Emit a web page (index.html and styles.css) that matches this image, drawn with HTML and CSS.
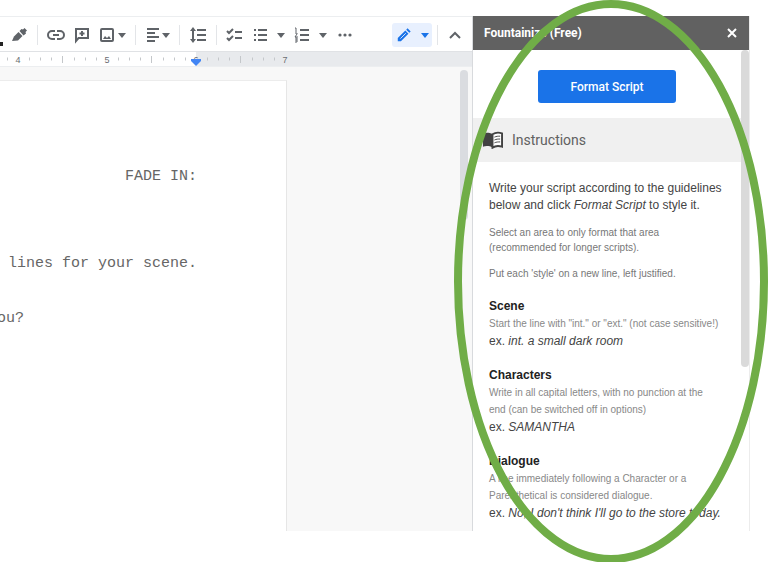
FILE: index.html
```html
<!DOCTYPE html>
<html lang="en">

<head>
    <meta charset="UTF-8">
    <meta name="viewport" content="width=device-width, initial-scale=1.0">
    <title>Fountainize</title>
    <link rel="stylesheet" href="styles.css">
</head>

<body>
    <div class="app">
        <main class="editor">
            <div class="toolbar">
                <span class="color-bar"></span>
                <button class="tool" aria-label="Highlight color">
                    <svg class="icon" viewBox="0 0 18 18"><g fill="#5f6368" stroke="none"><path d="M2 15l2-4.500L8.500 6l4 4L8 14.500z"/><path d="M9.500 5l2-2 1.500.5L14.500 2 17 4.500 15.500 6l.5 1.500-2.500 2z"/></g></svg>
                </button>
                <span class="sep"></span>
                <button class="tool" aria-label="Insert link">
                    <svg class="icon" viewBox="0 0 18 18"><path d="M8 5H5a4 4 0 0 0 0 8h3M10 5h3a4 4 0 0 1 0 8h-3M6 9h6"/></svg>
                </button>
                <button class="tool" aria-label="Add comment">
                    <svg class="icon" viewBox="0 0 18 18"><path d="M3 15V3h12v9H5.500zM9 5v5M6.500 7.500h5"/></svg>
                </button>
                <button class="tool drop" aria-label="Insert image">
                    <svg class="icon" viewBox="0 0 18 18"><rect x="3" y="3" width="12" height="12" rx="1"/><path d="M5 13l2-3 2 2 2-2 2 3z" fill="#5f6368" stroke="none"/></svg>
                    <svg class="arrow" viewBox="0 0 8 5"><path d="M0 0h8L4 5z"/></svg>
                </button>
                <span class="sep"></span>
                <button class="tool drop tight" aria-label="Align">
                    <svg class="icon" viewBox="0 0 18 18"><path d="M3 3h12M3 7h8M3 11h12M3 15h8"/></svg>
                    <svg class="arrow" viewBox="0 0 8 5"><path d="M0 0h8L4 5z"/></svg>
                </button>
                <span class="sep"></span>
                <button class="tool" aria-label="Line spacing">
                    <svg class="icon" viewBox="0 0 18 18"><path d="M8 4h9M8 9h9M8 14h9M4 4v10"/><path d="M4 1l3 4H1zM4 17l3-4H1z" fill="#5f6368" stroke="none"/></svg>
                </button>
                <span class="sep"></span>
                <button class="tool" aria-label="Checklist">
                    <svg class="icon" viewBox="0 0 18 18"><path d="M9 6h7M9 12h7M1 5l2 2 4-4M1 12l2 2 4-4"/></svg>
                </button>
                <button class="tool drop wide" aria-label="Bulleted list">
                    <svg class="icon" viewBox="0 0 18 18"><path d="M7 4h9M7 9h9M7 14h9M3 4h2M3 9h2M3 14h2"/></svg>
                    <svg class="arrow" viewBox="0 0 8 5"><path d="M0 0h8L4 5z"/></svg>
                </button>
                <button class="tool drop wide" aria-label="Numbered list">
                    <svg class="icon" viewBox="0 0 18 18"><path d="M7 4h9M7 9h9M7 14h9"/><path d="M2 2h1v4M2 7h2v1l-2 3h3M2 12h2v4H2M2 14h2" stroke-width="1"/></svg>
                    <svg class="arrow" viewBox="0 0 8 5"><path d="M0 0h8L4 5z"/></svg>
                </button>
                <button class="tool" aria-label="More">
                    <svg class="icon" viewBox="0 0 18 18"><g fill="#5f6368" stroke="none"><circle cx="4" cy="9" r="1.600"/><circle cx="9" cy="9" r="1.600"/><circle cx="14" cy="9" r="1.600"/></g></svg>
                </button>
                <button class="mode" aria-label="Editing mode">
                    <svg class="icon" viewBox="0 0 18 18"><path d="M2 16v-3.500L10.500 4l3.500 3.500L5.500 16zM11.500 3L13 1.500 16.500 5 15 6.500z" fill="#1a73e8" stroke="none"/><path d="M5 13l6-6" stroke="#e8f0fe" stroke-width="1"/></svg>
                    <svg class="arrow" viewBox="0 0 8 5"><path d="M0 0h8L4 5z"/></svg>
                </button>
                <span class="sep"></span>
                <button class="tool" aria-label="Hide the menus">
                    <svg class="icon" viewBox="0 0 18 18"><path d="M3 12l5-5 5 5"/></svg>
                </button>
            </div>

            <svg class="ruler" height="14">
                <defs>
                    <pattern id="ticks" x="7" width="89" height="14" patternUnits="userSpaceOnUse">
                        <path d="M.5 5.500v3M22.500 5.500v3M33.500 5.500v3M44.500 5.500v3M55.500 4v7M67.500 5.500v3M78.500 5.500v3" stroke="#c4c7ca"/>
                    </pattern>
                </defs>
                <rect width="196" height="14" fill="#fff"/>
                <rect width="280" height="14" fill="url(#ticks)"/>
                <text x="18" y="11">4</text>
                <text x="107" y="11">5</text>
                <text x="196" y="11">6</text>
                <text x="285" y="11">7</text>
                <path d="M191 7h10v2l-5 5-5-5z" fill="#4285f4"/>
            </svg>

            <div class="canvas">
                <div class="paper">
                    <p class="line transition">FADE IN:</p>
                    <p class="line action">n lines for your scene.</p>
                    <p class="line speech">ou?</p>
                </div>
                <div class="scroll"></div>
            </div>
        </main>

        <aside class="sidebar">
            <header class="side-head">
                <h1>Fountainize (Free)</h1>
                <button class="close" aria-label="Close">
                    <svg width="10" height="10" viewBox="0 0 10 10"><path d="M1 1l8 8M9 1l-8 8" stroke="#fff" stroke-width="2"/></svg>
                </button>
            </header>
            <div class="side-body">
                <div class="side-content">
                    <div class="action-row">
                        <button class="format">Format Script</button>
                    </div>
                    <h2 class="band">
                        <svg width="21" height="18" viewBox="0 0 22 18"><path d="M11 3C8 1 4 1 1 2v14c3-1 7-1 10 1z" fill="#424242"/><path d="M11 3c3-2 7-2 10-1v14c-3-1-7-1-10 1z" fill="#fff" stroke="#424242" stroke-width="2"/><path d="M13 6c2-1 4-1 6-1M13 9c2-1 4-1 6-1M13 12c2-1 4-1 6-1" fill="none" stroke="#424242"/></svg>
                        Instructions
                    </h2>
                    <div class="guide">
                        <p class="intro">Write your script according to the guidelines<br>below and click <i>Format Script</i> to style it.</p>
                        <p class="note">Select an area to only format that area<br>(recommended for longer scripts).</p>
                        <p class="note">Put each 'style' on a new line, left justified.</p>

                        <section class="rule">
                            <h3>Scene</h3>
                            <p class="desc">Start the line with "int." or "ext." (not case sensitive!)</p>
                            <p>ex. <i>int. a small dark room</i></p>
                        </section>
                        <section class="rule">
                            <h3>Characters</h3>
                            <p class="desc">Write in all capital letters, with no punction at the<br>end (can be switched off in options)</p>
                            <p>ex. <i>SAMANTHA</i></p>
                        </section>
                        <section class="rule">
                            <h3>Dialogue</h3>
                            <p class="desc">A line immediately following a Character or a<br>Parenthetical is considered dialogue.</p>
                            <p>ex. <i>No, I don't think I'll go to the store today.</i></p>
                        </section>
                    </div>
                </div>
                <div class="side-scroll"></div>
            </div>
            <!-- green highlight ring -->
            <svg class="ring" viewBox="0 0 314 562" preserveAspectRatio="none"><ellipse cx="157" cy="281" rx="153" ry="277" fill="none" stroke="#70ad47" stroke-width="8"/></svg>
        </aside>
    </div>
</body>

</html>
```
FILE: styles.css
```css
* {
    box-sizing: border-box;
}

body {
    margin: 0;
    background: #fff;
    font-family: "Liberation Sans", Arial, sans-serif;
}

h1, h2, h3, p {
    margin: 0;
}

button {
    border: none;
    padding: 0;
    background: none;
    cursor: pointer;
}

.app {
    display: flex;
    margin: 16px 18px 32px 0;
}

.editor {
    flex: 1;
    min-width: 0;
    display: flex;
    flex-direction: column;
    overflow: hidden;
}

/* toolbar */
.toolbar {
    display: flex;
    align-items: center;
    height: 36px;
    padding: 2px 3px 0 0;
    border-top: 1px solid #eceef0;
    border-bottom: 1px solid #e0e2e5;
}

.color-bar {
    align-self: flex-end;
    width: 3px;
    height: 4px;
    margin: 0 3px 5px 0;
    background: #222;
}

.tool {
    flex: none;
    display: flex;
    align-items: center;
    justify-content: center;
    width: 26px;
    height: 24px;
}

.drop {
    justify-content: flex-start;
    width: 35px;
    padding-left: 3px;
    gap: 2px;
}

.drop.tight {
    width: 33px;
    gap: 0;
}

.drop.wide {
    width: 42px;
    gap: 8px;
}

.icon {
    width: 18px;
    height: 18px;
    fill: none;
    stroke: #5f6368;
    stroke-width: 2;
}

.arrow {
    width: 8px;
    height: 5px;
    fill: #5f6368;
}

.sep {
    flex: none;
    width: 1px;
    height: 20px;
    margin: 0 5px;
    background: #e3e5e8;
}

.mode {
    display: flex;
    align-items: center;
    justify-content: center;
    gap: 9px;
    width: 40px;
    height: 24px;
    margin-left: auto;
    background: #e8f0fe;
    border-radius: 3px;
}

.mode .icon {
    width: 16px;
}

.mode .arrow {
    fill: #1a73e8;
}

.ruler {
    display: block;
    width: 100%;
    background: #e8eaed;
}

.ruler text {
    font-size: 9px;
    fill: #6b6e72;
    text-anchor: middle;
}

/* document */
.canvas {
    flex: 1;
    display: flex;
    justify-content: space-between;
    background: #f8f8f8;
    border-top: 1px solid #eceef0;
}

.paper {
    width: 287px;
    margin-top: 13px;
    padding: 87px 89px 0 0;
    background: #fff;
    border-top: 1px solid #ececec;
    border-right: 1px solid #e6e6e6;
}

.line {
    display: flex;
    justify-content: flex-end;
    font-family: "Liberation Mono", "Courier New", monospace;
    font-size: 15px;
    line-height: 18px;
    color: #666;
    white-space: nowrap;
}

.action {
    margin-top: 69px;
}

.speech {
    width: 24px;
    margin-top: 37px;
}

.scroll {
    width: 8px;
    height: 150px;
    margin: 3px 4px 0 0;
    background: #dadce0;
    border-radius: 4px;
}

/* add-on sidebar */
.sidebar {
    position: relative;
    flex: none;
    width: 278px;
    border-left: 1px solid #d8dadd;
    border-right: 1px solid #ececec;
}

.side-head {
    display: flex;
    align-items: center;
    justify-content: space-between;
    height: 34px;
    padding: 0 12px 0 11px;
    background: #616161;
}

.side-head h1 {
    font-family: Roboto, sans-serif;
    font-size: 12px;
    font-weight: 700;
    color: #fff;
}

.close {
    display: flex;
}

.side-body {
    display: flex;
}

.side-content {
    flex: 1;
}

.side-scroll {
    width: 8px;
    height: 317px;
    background: #dadada;
    border-radius: 4px;
}

.action-row {
    display: flex;
    justify-content: center;
    padding: 20px 0 15px;
}

.format {
    width: 138px;
    height: 33px;
    background: #1a73e8;
    border-radius: 3px;
    font-family: Roboto, sans-serif;
    font-size: 12px;
    font-weight: 500;
    color: #fff;
}

.band {
    display: flex;
    align-items: center;
    gap: 9px;
    height: 44px;
    padding-left: 9px;
    background: #f0f0f0;
    font-family: Roboto, sans-serif;
    font-size: 14px;
    font-weight: 400;
    color: #616161;
}

.guide {
    padding: 18px 0 9px 16px;
    font-size: 12px;
    line-height: 17px;
    color: #444;
    white-space: nowrap;
}

.note {
    margin-top: 11px;
    font-size: 10px;
    line-height: 15px;
    color: #777;
}

.rule {
    margin-top: 16px;
}

.rule h3 {
    font-size: 12px;
    line-height: 18px;
    color: #222;
}

.desc {
    font-size: 10px;
    color: #888;
}

.rule p:last-child {
    line-height: 18px;
}

.ring {
    position: absolute;
    top: -16px;
    left: -19px;
    width: 314px;
    height: calc(100% + 48px);
    pointer-events: none;
}
```
